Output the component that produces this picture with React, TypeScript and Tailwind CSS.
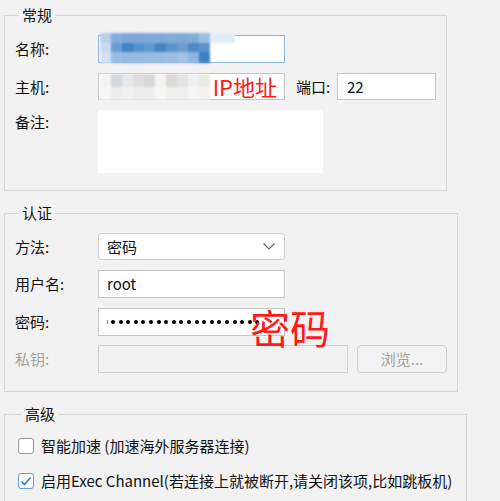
import React from "react";

const nameTop = ["#b9d1ec", "#86aedb", "#7fa9d9", "#7ea8d8", "#80aad9", "#7fa9d8", "#81abd9", "#7fa9d8", "#84acda", "#9dbfe3"];
const nameMid = ["#c8dcf0", "#6b9bd1", "#3e84c6", "#5592cc", "#6298ce", "#4286c8", "#5a94cc", "#6a9ccf", "#4b8bc8", "#5b95cc"];
const nameBot = ["#d3e2f2", "#9cbde2", "#97bae0", "#98bae1", "#99bbe1", "#9abce1", "#9dbee2", "#a3c2e4", "#8fb5df", "#3f80c4"];

const hostTop = ["#f3f3f3", "#d3d9e1", "#e7e9eb", "#dedede", "#d6d8da", "#f4f4f1", "#dddbd6", "#e3e3e1", "#eef0f3", "#ebe8e1"];
const hostBot = ["#f6f6f6", "#eceef0", "#f1f1f1", "#ededed", "#efefef", "#f7f7f5", "#f1f0ee", "#efefef", "#f5f6f7", "#f4f3ef"];

function MosaicRow({ colors, h }: { colors: string[]; h: string }) {
  return (
    <div className={`flex ${h}`}>
      {colors.map((c, i) => (
        <div key={i} className="w-[11px] h-full" style={{ backgroundColor: c }} />
      ))}
    </div>
  );
}

function Checkbox({ checked }: { checked?: boolean }) {
  return (
    <div
      className={`w-[16px] h-[16px] rounded-[3px] border bg-white flex items-center justify-center shrink-0 ${
        checked ? "border-[#5b9ee3]" : "border-[#9a9a9a]"
      }`}
    >
      {checked && (
        <svg width="14" height="14" viewBox="0 0 14 14" fill="none">
          <path d="M2.5 7.5 L5.5 10.5 L11.5 3.5" stroke="#2f7fd6" strokeWidth="1.6" />
        </svg>
      )}
    </div>
  );
}

export default function App() {
  const dots = Array.from({ length: 20 });

  return (
    <div className="h-[501px] w-[500px] overflow-hidden bg-[#f2f2f2] pt-[5px] font-['Noto_Sans_CJK_SC',sans-serif] text-[15px] leading-[20px] text-[#111]">
      {/* 常规 */}
      <fieldset className="ml-[4px] w-[443px] border border-[#d5d5d5] pl-[10px] pt-[10px] pb-[17px]">
        <legend className="ml-[4px] px-[3px] leading-[20px]">常规</legend>

        <div className="flex items-center">
          <span className="w-[83px]">名称:</span>
          <div className="relative w-[187px] h-[28px] bg-white border border-[#8db5e2] overflow-visible">
            <div className="absolute left-[1px] top-[-3px] flex flex-col blur-[1px]">
              <div className="flex">
                <MosaicRow colors={nameTop} h="h-[10px]" />
                <div className="w-[25px] h-[10px] bg-[#e4edf7]" />
              </div>
              <MosaicRow colors={nameMid} h="h-[9px]" />
              <MosaicRow colors={nameBot} h="h-[11px]" />
            </div>
          </div>
        </div>

        <div className="flex items-center mt-[10px]">
          <span className="w-[83px]">主机:</span>
          <div className="relative w-[187px] h-[27px] bg-white border border-[#c6c6c6]">
            <div className="absolute left-[1px] top-[0px] flex flex-col blur-[1px]">
              <MosaicRow colors={hostTop} h="h-[13px]" />
              <MosaicRow colors={hostBot} h="h-[13px]" />
            </div>
            <span className="absolute right-[7px] top-[-4px] text-[22px] leading-[32px] text-[#ff1a1a]">
              IP地址
            </span>
          </div>
          <span className="ml-[11px] w-[41px]">端口:</span>
          <div className="w-[99px] h-[27px] bg-white border border-[#c6c6c6] flex items-center pl-[9px]">
            22
          </div>
        </div>

        <div className="flex items-start mt-[10px]">
          <span className="w-[83px] pt-[2px]">备注:</span>
          <div className="w-[225px] h-[63px] bg-white" />
        </div>
      </fieldset>

      {/* 认证 */}
      <fieldset className="ml-[4px] mt-[12px] w-[454px] border border-[#d5d5d5] pl-[10px] pt-[10px] pb-[18px]">
        <legend className="ml-[4px] px-[3px] leading-[20px]">认证</legend>

        <div className="flex items-center">
          <span className="w-[83px]">方法:</span>
          <div className="w-[187px] h-[27px] bg-white border border-[#cfcfcf] rounded-[3px] flex items-center justify-between pl-[8px] pr-[9px]">
            <span>密码</span>
            <svg width="12" height="7" viewBox="0 0 12 7" fill="none">
              <path d="M0.5 0.5 L6 6 L11.5 0.5" stroke="#606060" strokeWidth="1.1" />
            </svg>
          </div>
        </div>

        <div className="flex items-center mt-[10px]">
          <span className="w-[83px]">用户名:</span>
          <div className="w-[187px] h-[28px] bg-white border border-[#c6c6c6] flex items-center pl-[8px]">
            root
          </div>
        </div>

        <div className="flex items-center mt-[10px]">
          <span className="w-[83px]">密码:</span>
          <div className="relative w-[187px] h-[28px] bg-white border border-[#c6c6c6] flex items-center pl-[8px]">
            <div className="w-[1px] h-[4px] bg-[#4a90d9] mr-[3px]" />
            <div className="flex gap-[3.6px]">
              {dots.map((_, i) => (
                <div key={i} className="w-[4px] h-[4px] rounded-full bg-black" />
              ))}
            </div>
            <span className="absolute left-[151px] top-[-6px] text-[40px] leading-[48px] text-[#ff1a1a] whitespace-nowrap">
              密码
            </span>
          </div>
        </div>

        <div className="flex items-center mt-[9px]">
          <span className="w-[83px] text-[#a0a0a0]">私钥:</span>
          <div className="w-[250px] h-[28px] bg-[#f2f2f2] border border-[#d0d0d0]" />
          <div className="ml-[9px] w-[90px] h-[28px] rounded-[4px] border border-[#d0d0d0] bg-[#f3f3f3] flex items-center justify-center text-[#a0a0a0]">
            浏览...
          </div>
        </div>
      </fieldset>

      {/* 高级 */}
      <fieldset className="ml-[4px] mt-[12px] w-[463px] border border-[#d5d5d5] pl-[13px] pt-[12px] pb-[20px]">
        <legend className="ml-[4px] px-[3px] leading-[20px]">高级</legend>

        <div className="flex items-center gap-[7px]">
          <Checkbox />
          <span>智能加速 (加速海外服务器连接)</span>
        </div>
        <div className="flex items-center gap-[7px] mt-[15px]">
          <Checkbox checked />
          <span className="whitespace-nowrap">启用Exec Channel(若连接上就被断开,请关闭该项,比如跳板机)</span>
        </div>
      </fieldset>
    </div>
  );
}
